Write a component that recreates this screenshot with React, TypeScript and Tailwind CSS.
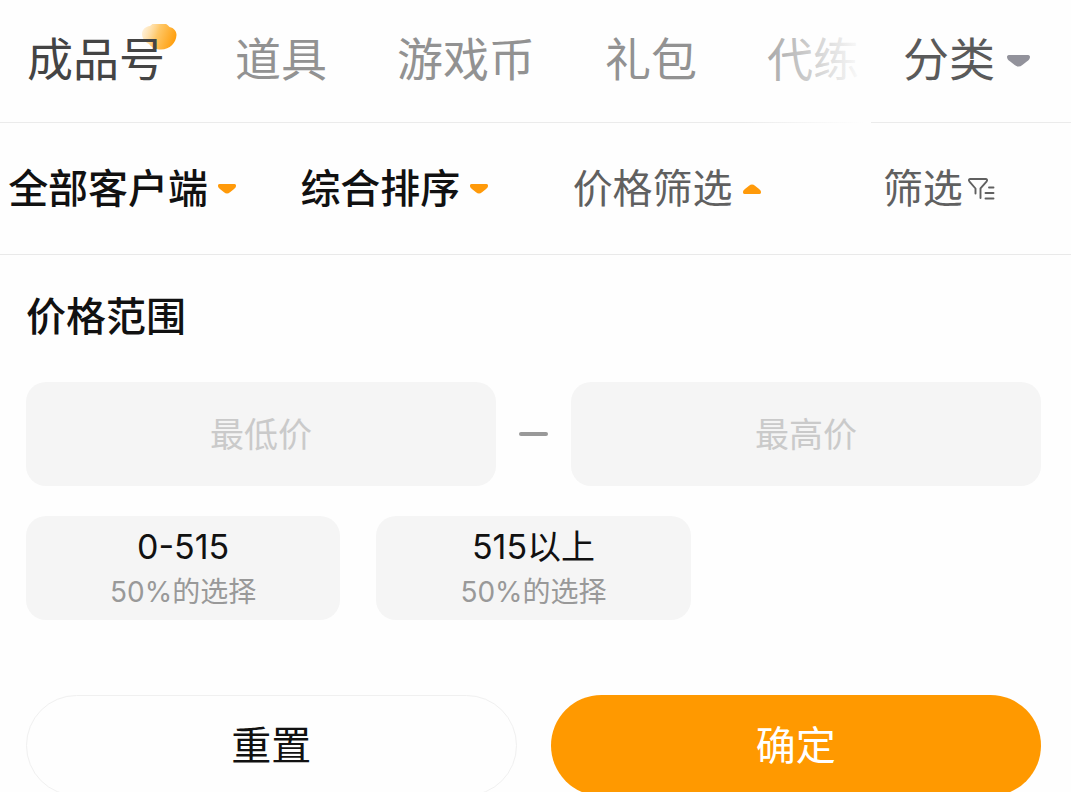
import React, { useState } from "react";
import clsx from "clsx";

const tabs = ["成品号", "道具", "游戏币", "礼包", "代练"];

const ranges = [
    { label: "0-515", note: "50%的选择" },
    { label: "515以上", note: "50%的选择" },
];

const Caret = ({ className }: { className?: string }) => (
    <svg viewBox="0 0 24 12" preserveAspectRatio="none" className={clsx("shrink-0 fill-current", className)} aria-hidden="true">
        <path d="M2 0H22C23.500 0 24 1 24 2C24 4 22.500 5.200 21 6.200L16 10C13.500 12 10.500 12 8 10L3 6.200C1.500 5.200 0 4 0 2C0 1 0.500 0 2 0z" />
    </svg>
);

const FilterIcon = () => (
    <svg viewBox="0 0 28 24" className="w-7 h-6 shrink-0" fill="none" stroke="currentColor" strokeWidth="1.900" strokeLinecap="round" strokeLinejoin="round" aria-hidden="true">
        <path d="M8.500 16.500v-5L2.300 4.300C1.500 3.200 2 2 3.400 2h15.200c1.400 0 1.900 1.200 1.100 2.300L13.500 11.300V21" />
        <path d="M22 10.500h4.500M18.500 16h8M18.500 21.500h8" />
    </svg>
);

const Cloud = () => (
    <svg viewBox="0 0 36 28" className="absolute -top-[14px] -right-3 w-9 h-7" aria-hidden="true">
        <defs>
            <linearGradient id="cloud" x1="0" y1="0.300" x2="1" y2="0.600">
                <stop offset="0" stopColor="#ffe9c4" stopOpacity="0.600" />
                <stop offset="0.450" stopColor="#ffc766" />
                <stop offset="1" stopColor="#ff9d0a" />
            </linearGradient>
        </defs>
        <path fill="url(#cloud)" d="M1 12C1 7 5 4.500 9 4C12 1 15 0 19 0C23 0 25.500 2 28.500 5C33 6 35.500 9 35.500 13C35 21 29 27.500 20 27.500C15 27.500 11 26 8 22C4 20 1 16 1 12z" />
    </svg>
);

const TabBar = () => {
    const [active, setActive] = useState(0);

    return (
        <header className="relative flex items-center h-[123px] border-b border-[#ebebeb] text-[46px] leading-none">
            <nav className="flex flex-1 gap-[70px] min-w-0 overflow-hidden pl-[27px] py-4">
                {tabs.map((tab, i) => (
                    <button key={tab} type="button" onClick={() => setActive(i)} className={clsx("relative shrink-0 -mt-1", i === active ? "text-[#444]" : "text-[#929292]")}>
                        {i === active && <Cloud />}
                        <span className="relative">{tab}</span>
                    </button>
                ))}
            </nav>
            {/* fades the tabs out before the category button */}
            <div className="absolute top-0 -bottom-px right-[200px] w-[130px] bg-linear-to-r from-[#fefefe]/0 to-[#fefefe] to-95% pointer-events-none" />
            <button type="button" className="flex items-center gap-3 w-[200px] pl-8 -mt-1 text-[#5a5a5a]">
                分类
                <Caret className="w-[23px] h-3 mt-1 text-[#92929b]" />
            </button>
        </header>
    );
};

const FilterBar = () => (
    <div className="border-b border-[#e9e9e9] overflow-hidden">
        <div className="grid grid-cols-4 h-[131px] -ml-[14px] -mr-1 text-[40px] leading-none text-[#606060]">
            <button type="button" className="flex items-center justify-center gap-[10px] font-medium text-[#111]">
                全部客户端
                <Caret className="w-[18px] h-[10px] text-[#ff9a0a]" />
            </button>
            <button type="button" className="flex items-center justify-center gap-[10px] font-medium text-[#111]">
                综合排序
                <Caret className="w-[18px] h-[10px] text-[#ff9a0a]" />
            </button>
            <button type="button" className="flex items-center justify-center gap-[10px]">
                价格筛选
                <Caret className="w-[18px] h-[10px] rotate-180 text-[#ff9a0a]" />
            </button>
            <button type="button" className="flex items-center justify-center gap-1">
                筛选
                <FilterIcon />
            </button>
        </div>
    </div>
);

const App = () => {
    return (
        <div className="h-screen overflow-hidden bg-[#fefefe] font-['Inter','Noto_Sans_CJK_SC',sans-serif]">
            <TabBar />
            <FilterBar />

            <form className="pl-[26px] pr-[30px]" onSubmit={(e) => e.preventDefault()}>
                <h2 className="pt-10 text-[40px] leading-[44px] font-medium text-[#111]">价格范围</h2>

                <div className="flex items-center mt-[43px]">
                    <input type="text" inputMode="numeric" aria-label="最低价" placeholder="最低价" className="flex-1 min-w-0 h-[104px] rounded-[20px] bg-[#f5f5f5] text-center text-[34px] text-[#111] placeholder:text-[#cacaca]" />
                    <span className="w-[29px] h-1 mx-[23px] rounded-full bg-[#999]" />
                    <input type="text" inputMode="numeric" aria-label="最高价" placeholder="最高价" className="flex-1 min-w-0 h-[104px] rounded-[20px] bg-[#f5f5f5] text-center text-[34px] text-[#111] placeholder:text-[#cacaca]" />
                </div>

                <div className="grid grid-cols-3 gap-9 mt-[30px]">
                    {ranges.map((range) => (
                        <button key={range.label} type="button" className="flex flex-col items-center justify-center h-[104px] pt-[2px] rounded-[20px] bg-[#f5f5f5]">
                            <span className="text-[34px] leading-[46px] text-[#111]">{range.label}</span>
                            <span className="text-[28px] leading-[44px] text-[#999]">{range.note}</span>
                        </button>
                    ))}
                </div>

                <div className="grid grid-cols-2 gap-[34px] mt-[75px] text-[40px] leading-none">
                    <button type="reset" className="h-[101px] rounded-full border border-[#f0f0f0] text-[#111]">
                        重置
                    </button>
                    <button type="submit" className="h-[101px] rounded-full bg-[#ff9900] text-white">
                        确定
                    </button>
                </div>
            </form>
        </div>
    );
};

export default App;
